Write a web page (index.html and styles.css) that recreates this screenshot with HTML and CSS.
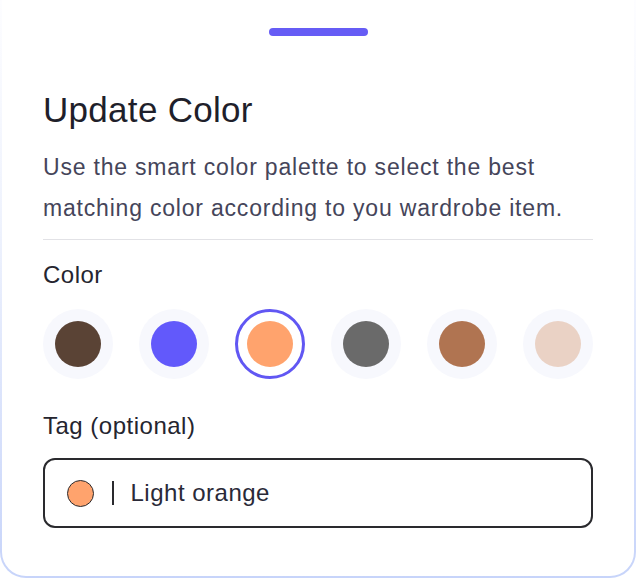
FILE: index.html
```html
<!DOCTYPE html>
<html lang="en">
<head>
  <meta charset="UTF-8">
  <title>Update Color</title>
  <link rel="stylesheet" href="styles.css">
</head>
<body>

<div class="sheet">
  <div class="sheet-inner">
    <div class="handle"></div>

    <h1>Update Color</h1>
    <p class="desc">Use the smart color palette to select the best matching color according to you wardrobe item.</p>
    <hr>

    <div class="label">Color</div>
    <div class="swatches">
      <div class="swatch"><span class="dot" style="background:#5a4335"></span></div>
      <div class="swatch"><span class="dot" style="background:#6259fb"></span></div>
      <div class="swatch selected"><span class="dot" style="background:#ffa36d"></span></div>
      <div class="swatch"><span class="dot" style="background:#6a6a6a"></span></div>
      <div class="swatch"><span class="dot" style="background:#b07451"></span></div>
      <div class="swatch"><span class="dot" style="background:#ead2c5"></span></div>
    </div>

    <div class="label tag-label">Tag (optional)</div>
    <div class="tag-input">
      <span class="tag-dot"></span>
      <span class="tag-sep"></span>
      <span class="tag-text">Light orange</span>
    </div>
  </div>
</div>

</body>
</html>
```

FILE: styles.css
```css
body {
  margin: 0;
  background: #fff;
  font-family: 'Liberation Sans', Arial, sans-serif;
  color: #23232f;
}
.sheet {
  width: 636px;
  height: 578px;
  box-sizing: border-box;
  padding: 0 2px 2px 2px;
  background: linear-gradient(to bottom, #fdfdff 0%, #eef2fd 40%, #c7d4fa 100%);
  border-radius: 0 0 26px 26px;
}
.sheet-inner {
  height: 100%;
  box-sizing: border-box;
  background: #fff;
  border-radius: 0 0 24px 24px;
  padding: 28px 41px 0 41px;
}
.handle {
  width: 99px;
  height: 8px;
  margin: 0 auto;
  background: #665cf5;
  border-radius: 4px;
}
h1 {
  margin: 52px 0 0 0;
  font-size: 35px;
  font-weight: 400;
  line-height: 44px;
  letter-spacing: 0.3px;
  color: #1f1f2b;
}
.desc {
  margin: 15px 0 0 0;
  font-size: 23px;
  line-height: 41px;
  color: #45455a;
  letter-spacing: 0.8px;
}
hr {
  border: 0;
  height: 1px;
  background: #e2e2e6;
  margin: 10px 0 0 0;
}
.label {
  margin-top: 22px;
  font-size: 24px;
  line-height: 26px;
  letter-spacing: 0.5px;
  color: #25252f;
}
.swatches {
  display: flex;
  justify-content: space-between;
  margin-top: 21px;
}
.swatch {
  width: 70px;
  height: 70px;
  box-sizing: border-box;
  border-radius: 50%;
  background: #f7f8fd;
  display: flex;
  align-items: center;
  justify-content: center;
}
.swatch.selected {
  background: #fff;
  border: 3px solid #6157f3;
}
.dot {
  width: 46px;
  height: 46px;
  border-radius: 50%;
}
.tag-label {
  margin-top: 34px;
}
.tag-input {
  margin-top: 19px;
  height: 70px;
  box-sizing: border-box;
  border: 2px solid #2a2a2e;
  border-radius: 12px;
  display: flex;
  align-items: center;
  padding-left: 22px;
}
.tag-dot {
  width: 27px;
  height: 27px;
  box-sizing: border-box;
  border-radius: 50%;
  background: #ffa36d;
  border: 1.5px solid #2a2a2e;
}
.tag-sep {
  width: 1.5px;
  height: 24px;
  background: #2a2a2e;
  margin: 0 17px 0 18px;
}
.tag-text {
  font-size: 24px;
  letter-spacing: 0.5px;
  color: #2a2a38;
}
```
